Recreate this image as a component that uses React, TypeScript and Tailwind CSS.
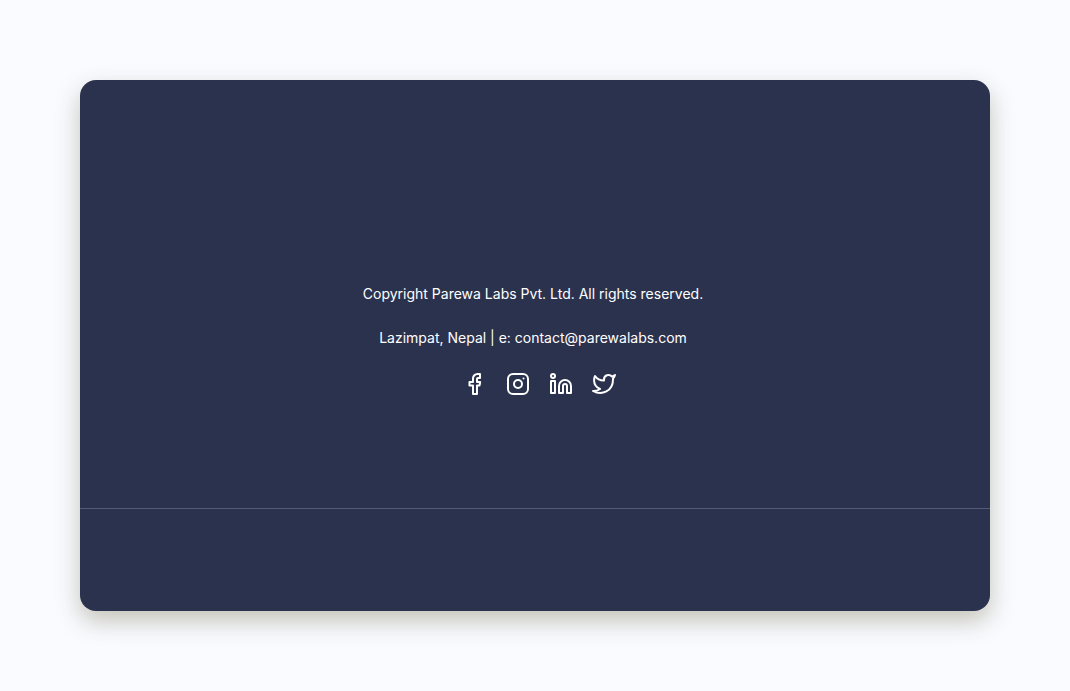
import React from "react";

type Social = { label: string; href: string; icon: React.ReactNode };

const socials: Social[] = [
  {
    label: "Facebook",
    href: "#facebook",
    icon: (
      <path d="M17 2h-2.500a4.500 4.500 0 0 0-4.500 4.500V10H6.500v3.600H10V22h4v-8.400h2.500L17.200 10H14V7a1 1 0 0 1 1-1h2z" />
    ),
  },
  {
    label: "Instagram",
    href: "#instagram",
    icon: (
      <>
        <rect x="2" y="2" width="20" height="20" rx="5" />
        <circle cx="12" cy="12" r="4" />
        <path d="M17.500 6.500h.01" />
      </>
    ),
  },
  {
    label: "LinkedIn",
    href: "#linkedin",
    icon: (
      <>
        <circle cx="4" cy="4" r="2" />
        <rect x="2" y="9" width="4" height="12" />
        <path d="M16 8a6 6 0 0 1 6 6v7h-4v-7a2 2 0 0 0-4 0v7h-4v-7a6 6 0 0 1 6-6z" />
      </>
    ),
  },
  {
    label: "Twitter",
    href: "#twitter",
    icon: (
      <path d="M23 3a10.900 10.900 0 0 1-3.140 1.530 4.480 4.480 0 0 0-7.860 3v1A10.660 10.660 0 0 1 3 4s-4 9 5 13a11.640 11.640 0 0 1-7 2c9 5 20 0 20-11.500a4.500 4.500 0 0 0-.08-.83A7.720 7.720 0 0 0 23 3z" />
    ),
  },
];

export default function App() {
  return (
    <main className="flex min-h-screen flex-col bg-[#f9fbff] p-20 font-['Inter',sans-serif]">
      <footer className="flex grow flex-col overflow-hidden rounded-2xl bg-[#2b324e] text-sm text-white shadow-[0_10px_24px_rgba(60,50,0,0.28)]">
        <div className="flex grow flex-col items-center justify-end border-b border-[#535b75] pb-28">
          <p className="mr-1 leading-6">Copyright Parewa Labs Pvt. Ltd. All rights reserved.</p>
          <p className="mt-5 mr-1 leading-6">
            Lazimpat, Nepal | e: <a href="mailto:contact@parewalabs.com">contact@parewalabs.com</a>
          </p>
          <ul className="mt-[22px] ml-2 flex gap-[19px]">
            {socials.map((s) => (
              <li key={s.label}>
                <a href={s.href} aria-label={s.label}>
                  <svg
                    className="size-6"
                    viewBox="0 0 24 24"
                    fill="none"
                    stroke="currentColor"
                    strokeWidth="2"
                    strokeLinecap="round"
                    strokeLinejoin="round"
                  >
                    {s.icon}
                  </svg>
                </a>
              </li>
            ))}
          </ul>
        </div>
        <div className="h-[102px]" />
      </footer>
    </main>
  );
}
